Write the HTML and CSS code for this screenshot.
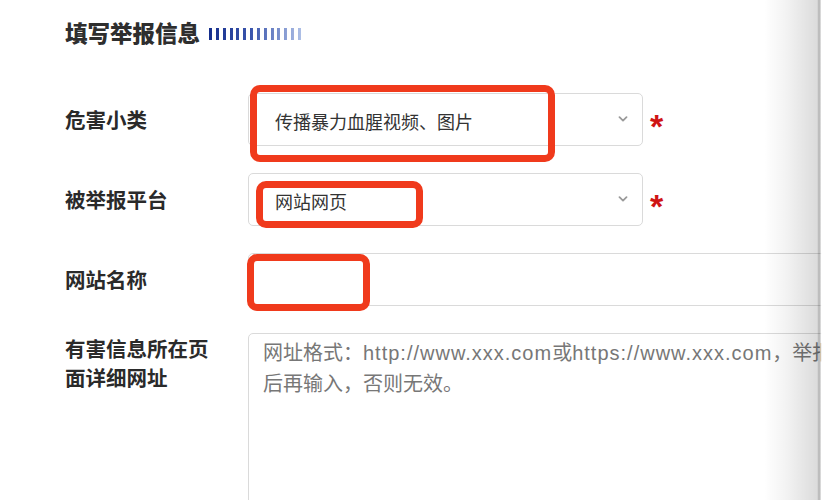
FILE: index.html
```html
<!DOCTYPE html>
<html lang="zh-CN">
<head>
<meta charset="utf-8">
<title>填写举报信息</title>
<link rel="stylesheet" href="styles.css">
</head>
<body>
<div class="page">
  <div class="content">
    <div class="title-row">
      <h2 class="title">填写举报信息</h2>
      <span class="bars"></span>
    </div>
    <div class="form">
      <div class="row">
        <label class="label">危害小类</label>
        <div class="field-wrap">
          <div class="select">
            <span class="select-text">传播暴力血腥视频、图片</span>
            <svg class="chevron" width="10" height="6" viewBox="0 0 10 6"><polyline points="1.5,1.2 5,4.6 8.5,1.2" fill="none" stroke="#9a9a9a" stroke-width="1.8" stroke-linecap="round" stroke-linejoin="round"/></svg>
          </div>
          <span class="required">*</span>
        </div>
      </div>
      <div class="row">
        <label class="label">被举报平台</label>
        <div class="field-wrap">
          <div class="select">
            <span class="select-text">网站网页</span>
            <svg class="chevron" width="10" height="6" viewBox="0 0 10 6"><polyline points="1.5,1.2 5,4.6 8.5,1.2" fill="none" stroke="#9a9a9a" stroke-width="1.8" stroke-linecap="round" stroke-linejoin="round"/></svg>
          </div>
          <span class="required">*</span>
        </div>
      </div>
      <div class="row">
        <label class="label">网站名称</label>
        <div class="input"></div>
      </div>
      <div class="row row-top">
        <label class="label label-wrap">有害信息所在页面详细网址</label>
        <div class="textarea">
          <div class="ph-line">网址格式：<span class="lat">http://www.xxx.com</span>或<span class="lat">https://www.xxx.com</span>，举报网址请复制浏览器地址栏</div>
          <div class="ph-line">后再输入，否则无效。</div>
        </div>
      </div>
    </div>
  </div>

  <div class="mark mark-1"></div>
  <div class="mark mark-2"></div>
  <div class="mark mark-3"></div>
  <div class="edge"></div>
</div>
</body>
</html>
```

FILE: styles.css
```css
* { box-sizing: border-box; }

html, body {
  margin: 0;
  padding: 0;
  background: #fff;
}

body {
  font-family: "Liberation Sans", "Noto Sans CJK SC", sans-serif;
  color: #333;
}

.page {
  position: relative;
  width: 822px;
  height: 500px;
  overflow: hidden;
  background: #fff;
}

.content {
  padding: 17px 0 0 65px;
}

.title-row {
  display: flex;
  align-items: center;
  gap: 9px;
  height: 30px;
}

.title {
  margin: 0;
  font-family: "Noto Sans CJK SC", sans-serif;
  font-size: 22.5px;
  line-height: 30px;
  font-weight: 900;
  color: #2e2e2e;
}

.bars {
  display: block;
  width: 94px;
  height: 12px;
  margin-top: 4px;
  background:
    repeating-linear-gradient(90deg, transparent 0 3px, #fff 3px 6.85px),
    linear-gradient(90deg, #152e8c 0%, #3b56ad 45%, #b2c3e8 100%);
}

.form {
  margin-top: 46px;
  display: flex;
  flex-direction: column;
  gap: 27px;
}

.row {
  display: grid;
  grid-template-columns: 183px 1fr;
  align-items: center;
}

.row-top {
  align-items: start;
}

.label {
  font-family: "Noto Sans CJK SC", sans-serif;
  font-size: 20.5px;
  line-height: 29px;
  font-weight: 700;
  color: #2a2a2a;
}

.label-wrap {
  max-width: 150px;
  padding-top: 1px;
}

.field-wrap {
  display: flex;
  align-items: center;
  gap: 7px;
}

.select {
  width: 395px;
  height: 53px;
  border: 1px solid #dadada;
  border-radius: 5px;
  display: flex;
  align-items: center;
  justify-content: space-between;
  padding: 0 14px 0 26px;
  background: #fff;
}

.select-text {
  font-family: "Noto Sans CJK SC", sans-serif;
  font-size: 18px;
  line-height: 26px;
  color: #333;
  padding-top: 3px;
}

.chevron {
  display: block;
  margin-top: -2px;
}

.required {
  font-family: "Liberation Sans", sans-serif;
  font-size: 34px;
  font-weight: 700;
  line-height: 1;
  color: #cf1414;
  margin-top: 12px;
}

.input {
  width: 700px;
  height: 53px;
  border: 1px solid #dadada;
  border-radius: 5px;
  background: #fff;
}

.textarea {
  width: 700px;
  height: 220px;
  border: 1px solid #dadada;
  border-radius: 5px;
  padding: 3px 14px;
  background: #fff;
  font-family: "Noto Sans CJK SC", sans-serif;
  font-size: 20px;
  line-height: 29px;
  color: #777;
  white-space: nowrap;
  overflow: hidden;
}

.lat {
  font-family: "Liberation Sans", sans-serif;
  letter-spacing: 1px;
}

.mark {
  position: absolute;
  border: 7px solid #f03a1c;
  border-radius: 10px;
}

.mark-1 { left: 250px; top: 85px; width: 305px; height: 77px; }
.mark-2 { left: 256px; top: 181px; width: 167px; height: 47px; }
.mark-3 { left: 247px; top: 254px; width: 123px; height: 57px; }

.edge {
  position: absolute;
  top: 0;
  right: 0;
  width: 58px;
  height: 100%;
  background: linear-gradient(90deg,
    rgba(0,0,0,0) 0,
    rgba(0,0,0,0.05) 40%,
    rgba(0,0,0,0.14) 92%,
    rgba(0,0,0,0.26) 93%,
    rgba(0,0,0,0.26) 97%,
    rgba(255,255,255,0.9) 98%);
}
```
